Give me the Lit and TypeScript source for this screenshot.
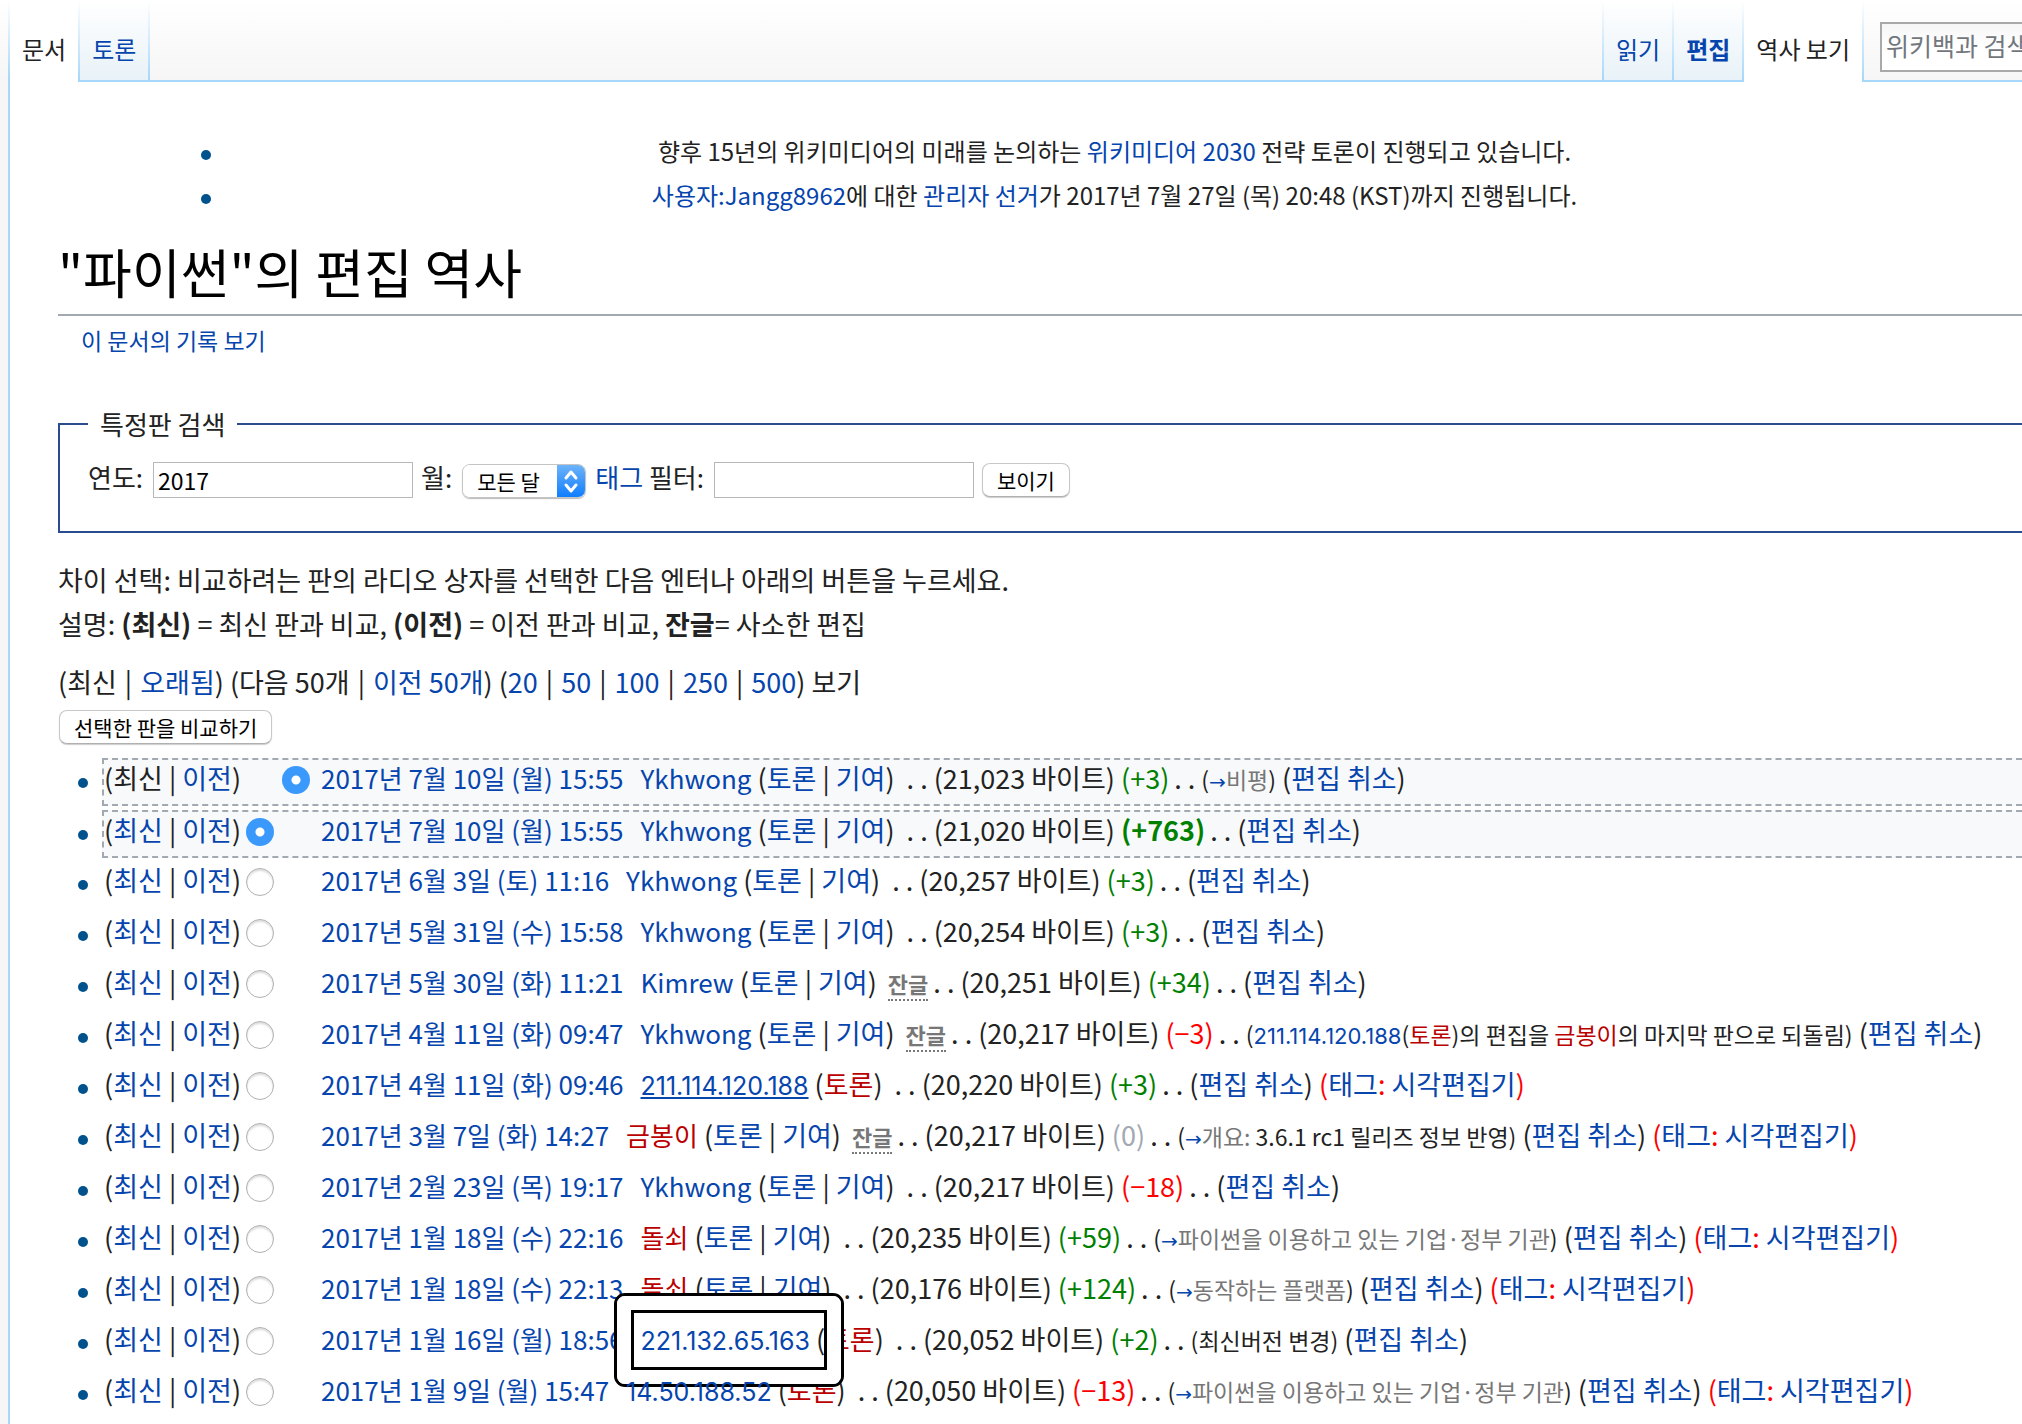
import { LitElement, html, css, nothing } from "lit";
import { customElement, property } from "lit/decorators.js";
import { classMap } from "lit/directives/class-map.js";

type Part = { text: string; kind?: "link" | "new"; ip?: boolean };

interface Revision {
  date: string;
  user: string;
  ip?: boolean;
  missing?: boolean;
  hovered?: boolean;
  marked?: boolean;
  minor?: boolean;
  bytes: string;
  diff: number;
  section?: string;
  comment?: Part[];
  tagged?: boolean;
}

const REVISIONS: Revision[] = [
  { date: "2017년 7월 10일 (월) 15:55", user: "Ykhwong", bytes: "21,023", diff: 3, section: "비평" },
  { date: "2017년 7월 10일 (월) 15:55", user: "Ykhwong", bytes: "21,020", diff: 763 },
  { date: "2017년 6월 3일 (토) 11:16", user: "Ykhwong", bytes: "20,257", diff: 3 },
  { date: "2017년 5월 31일 (수) 15:58", user: "Ykhwong", bytes: "20,254", diff: 3 },
  { date: "2017년 5월 30일 (화) 11:21", user: "Kimrew", minor: true, bytes: "20,251", diff: 34 },
  {
    date: "2017년 4월 11일 (화) 09:47", user: "Ykhwong", minor: true, bytes: "20,217", diff: -3,
    comment: [
      { text: "211.114.120.188", kind: "link", ip: true },
      { text: "(" },
      { text: "토론", kind: "new" },
      { text: ")의 편집을 " },
      { text: "금봉이", kind: "new" },
      { text: "의 마지막 판으로 되돌림" },
    ],
  },
  { date: "2017년 4월 11일 (화) 09:46", user: "211.114.120.188", ip: true, hovered: true, bytes: "20,220", diff: 3, tagged: true },
  {
    date: "2017년 3월 7일 (화) 14:27", user: "금봉이", missing: true, minor: true, bytes: "20,217", diff: 0,
    section: "개요:", comment: [{ text: " 3.6.1 rc1 릴리즈 정보 반영" }], tagged: true,
  },
  { date: "2017년 2월 23일 (목) 19:17", user: "Ykhwong", bytes: "20,217", diff: -18 },
  { date: "2017년 1월 18일 (수) 22:16", user: "돌쇠", missing: true, bytes: "20,235", diff: 59, section: "파이썬을 이용하고 있는 기업·정부 기관", tagged: true },
  { date: "2017년 1월 18일 (수) 22:13", user: "돌쇠", missing: true, bytes: "20,176", diff: 124, section: "동작하는 플랫폼", tagged: true },
  { date: "2017년 1월 16일 (월) 18:56", user: "221.132.65.163", ip: true, marked: true, bytes: "20,052", diff: 2, comment: [{ text: "최신버전 변경" }] },
  { date: "2017년 1월 9일 (월) 15:47", user: "14.50.188.52", ip: true, bytes: "20,050", diff: -13, section: "파이썬을 이용하고 있는 기업·정부 기관", tagged: true },
];

// Size changes beyond this many bytes are shown in bold.
const LARGE_CHANGE = 500;

const links = css`
  a {
    color: #0645ad;
    text-decoration: none;
  }
  a:hover {
    text-decoration: underline;
  }
  a.new {
    color: #ba0000;
  }
`;

@customElement("history-row")
class HistoryRow extends LitElement {
  @property({ attribute: false }) rev!: Revision;
  @property({ type: Number }) index = 0;

  static styles = [
    links,
    css`
      :host {
        display: flex;
        align-items: flex-start;
        white-space: pre;
        font-size: 27px;
      }
      .bullet {
        flex: none;
        width: 10px;
        height: 10px;
        margin: 18px 14px 0 0;
        border-radius: 50%;
        background: #00528c;
      }
      .box {
        flex: 1;
        display: grid;
        grid-template-columns: 142px 36px 39px 1fr;
        height: 47px;
        box-sizing: border-box;
        border-left: 2px solid transparent;
        line-height: 36px;
      }
      .box.selected {
        height: 48px;
        border: 2px dashed #a2a9b1;
        border-right: none;
        background: #f8f9fa;
      }
      .bullet.selected {
        margin-top: 20px;
      }
      .radio {
        appearance: none;
        box-sizing: border-box;
        display: block;
        width: 28px;
        height: 28px;
        margin: 6px 0 0;
        border: 1px solid #b0b0b0;
        border-radius: 50%;
        background: #fff;
        box-shadow: inset 0 2px 2px #ddd;
      }
      .radio:checked {
        border: none;
        background: radial-gradient(circle, #fff 0 4px, #3b99fc 5px);
        box-shadow: none;
      }
      .date,
      .user {
        font-size: 26px;
      }
      .user {
        margin-left: 17px;
        position: relative;
      }
      .ip {
        font-family: Inter, sans-serif;
        font-size: 25px;
      }
      .small .ip {
        font-size: 22px;
      }
      .hovered {
        text-decoration: underline;
      }
      .dots {
        margin: 0 6px 0 5px;
      }
      .dots.first {
        margin-left: 12px;
      }
      .minor + .dots.first {
        margin-left: 5px;
      }
      .minor {
        margin-left: 11px;
        border-bottom: 2px dotted #777;
        color: #777;
        font-size: 22px;
        font-weight: bold;
        text-decoration: none;
      }
      .plus {
        color: #008000;
      }
      .minus {
        color: #f00;
      }
      .zero {
        color: #a2a9b1;
      }
      .big {
        font-weight: bold;
      }
      .small {
        font-size: 23px;
      }
      .arrow {
        font-family: "DejaVu Sans", sans-serif;
        font-size: 20px;
      }
      .section {
        color: #777;
      }
      .tags {
        color: #f00;
      }
      .mark {
        position: absolute;
        left: -27px;
        top: calc(50% - 46px);
        width: 230px;
        height: 94px;
        box-sizing: border-box;
        border: 3px solid #000;
        border-radius: 11px;
        pointer-events: none;
      }
      .band {
        display: block;
        height: 100%;
        box-sizing: border-box;
        border: 14px solid #fff;
        border-radius: 8px;
      }
      .frame {
        display: block;
        height: 100%;
        box-sizing: border-box;
        border: 3px solid #000;
      }
    `,
  ];

  private part(p: Part) {
    return p.kind
      ? html`<a href="#" class=${classMap({ new: p.kind === "new", ip: !!p.ip })}>${p.text}</a>`
      : p.text;
  }

  private user(r: Revision) {
    const mark = html`<span class="mark"><span class="band"><span class="frame"></span></span></span>`;
    return html`<span class="user"><a href="#" class=${classMap({ new: !!r.missing, ip: !!r.ip, hovered: !!r.hovered })}>${r.user}</a>${r.marked ? mark : nothing}</span>`;
  }

  private talk(r: Revision) {
    return r.ip
      ? html`(<a href="#" class="new">토론</a>)`
      : html`(<a href="#">토론</a> | <a href="#">기여</a>)`;
  }

  private size(n: number) {
    const sign = n > 0 ? "+" : n < 0 ? "−" : "";
    const classes = { plus: n > 0, minus: n < 0, zero: n === 0, big: Math.abs(n) > LARGE_CHANGE };
    return html`<span class=${classMap(classes)}>(${sign}${Math.abs(n)})</span>`;
  }

  private comment(r: Revision) {
    if (!r.section && !r.comment) return nothing;
    const section = html`<a href="#" class="arrow">→</a><span class="section">${r.section}</span>`;
    return html`<span class="small">(${r.section ? section : nothing}${r.comment?.map((p) => this.part(p))})</span> `;
  }

  private tags(r: Revision) {
    return r.tagged
      ? html` <span class="tags">(<a href="#">태그</a>: <a href="#">시각편집기</a>)</span>`
      : nothing;
  }

  private radio(name: string, label: string, checked: boolean) {
    return html`<input class="radio" type="radio" name=${name} aria-label=${label} .checked=${checked} />`;
  }

  // White space is preserved inside a row, so the template stays on unbroken lines.
  render() {
    const r = this.rev;
    const first = this.index === 0;
    const selected = this.index < 2;
    const current = first ? "최신" : html`<a href="#">최신</a>`;
    const older = first ? nothing : this.radio("oldid", `${r.date} 이전 판`, selected);
    const newer = first ? this.radio("diff", `${r.date} 새 판`, true) : nothing;
    const minor = r.minor ? html`<abbr class="minor">잔글</abbr>` : nothing;
    const entry = html`<span><a href="#" class="date">${r.date}</a>${this.user(r)} ${this.talk(r)}${minor}<span class="dots first">. .</span>(${r.bytes} 바이트) ${this.size(r.diff)}<span class="dots">. .</span>${this.comment(r)}(<a href="#">편집 취소</a>)${this.tags(r)}</span>`;
    return html`<span class=${classMap({ bullet: true, selected })}></span><div class=${classMap({ box: true, selected })}><span>(${current} | <a href="#">이전</a>)</span><span>${older}</span><span>${newer}</span>${entry}</div>`;
  }
}

@customElement("app-root")
class AppRoot extends LitElement {
  static styles = [
    links,
    css`
      :host {
        display: flex;
        flex-direction: column;
        min-height: 100vh;
        overflow: hidden;
        background: #fff;
        color: #222;
        font-family: "Noto Sans CJK KR", sans-serif;
        font-size: 26px;
      }
      ul {
        list-style: none;
        margin: 0;
        padding: 0;
      }
      .head {
        display: flex;
        height: 82px;
        background: linear-gradient(#fff, #f6f6f6 80px);
        font-size: 24px;
        line-height: 34px;
      }
      .gutter {
        flex: none;
        width: 8px;
      }
      .edge {
        flex: none;
        width: 2px;
        background: linear-gradient(#fff, #a7d7f9 80px);
      }
      .tab {
        flex: none;
        box-sizing: border-box;
        padding: 32px 12px 0;
        border-bottom: 2px solid #a7d7f9;
        background: linear-gradient(#fff, #e8f2f8);
      }
      .tab.current {
        border: none;
        background: #fff;
      }
      .tab.current a {
        color: #222;
      }
      .tab.strong {
        font-weight: bold;
      }
      .rest {
        flex: 1;
        border-bottom: 2px solid #a7d7f9;
      }
      .search {
        flex: none;
        box-sizing: border-box;
        width: 158px;
        padding: 22px 0 0 16px;
        border-bottom: 2px solid #a7d7f9;
        overflow: hidden;
      }
      .search input {
        box-sizing: border-box;
        width: 400px;
        height: 50px;
        padding: 0 4px 4px;
        border: 2px solid #a9a9a9;
        border-radius: 0;
        background: linear-gradient(#f6f6f6, #fff 50%);
        font: 25px "Noto Sans CJK KR", sans-serif;
      }
      .search input::placeholder {
        color: #72777d;
      }
      .body {
        flex: 1;
        display: flex;
      }
      .body > .gutter {
        background: #f6f6f6;
      }
      .body > .edge {
        background: #a7d7f9;
      }
      main {
        flex: 1;
        min-width: 0;
        padding: 47px 0 0 48px;
      }
      .notices {
        margin-left: 143px;
        font-size: 24px;
        line-height: 44px;
      }
      .notices li {
        display: flex;
        align-items: center;
        padding-right: 4px;
      }
      .notices li::before {
        content: "";
        width: 10px;
        height: 10px;
        margin-top: 8px;
        border-radius: 50%;
        background: #00528c;
      }
      .notices p {
        flex: 1;
        margin: 0;
        text-align: center;
      }
      h1 {
        margin: 17px 0 0;
        padding-bottom: 6px;
        border-bottom: 2px solid #a2a9b1;
        color: #000;
        font-size: 53px;
        font-weight: normal;
        line-height: 74px;
      }
      .sub {
        padding-left: 23px;
        font-size: 23px;
        line-height: 48px;
      }
      fieldset {
        margin: 41px -2px 0 0;
        padding: 19px 28px 33px;
        border: 2px solid #2a4b8d;
      }
      legend {
        padding: 0 12px;
        line-height: 38px;
      }
      .filters {
        display: flex;
        height: 36px;
        line-height: 30px;
      }
      .filters input {
        box-sizing: border-box;
        width: 260px;
        height: 36px;
        margin: 0 8px 0 10px;
        padding: 0 4px;
        border: 1px solid #b8b8b8;
        color: #000;
        font: 23px "Noto Sans CJK KR", sans-serif;
      }
      .picker {
        display: flex;
        height: 34px;
        margin: 2px 9px 0 10px;
        box-sizing: border-box;
        border: 1px solid #c4c4c4;
        border-radius: 8px;
        overflow: hidden;
        box-shadow: 0 1px 1px #bbb;
      }
      .picker select {
        appearance: none;
        width: 94px;
        padding: 0 0 0 14px;
        border: none;
        background: #fff;
        color: #000;
        font: 21px/32px "Noto Sans CJK KR", sans-serif;
      }
      .picker svg {
        display: block;
        width: 28px;
        height: 34px;
        background: linear-gradient(#6cb3fa, #0a7aff);
      }
      button {
        height: 34px;
        margin: 1px 0 0;
        padding: 0 14px;
        border: 1px solid #c8c8c8;
        border-bottom-color: #b0b0b0;
        border-radius: 8px;
        background: #fff;
        box-shadow: 0 1px 1px #ccc;
        color: #000;
        font: 21px/30px "Noto Sans CJK KR", sans-serif;
      }
      .text {
        margin: 25px 0 14px;
        font-size: 27px;
        line-height: 44px;
      }
      .text p {
        margin: 0;
      }
      .pager {
        margin-bottom: 6px;
        font-size: 27px;
        line-height: 44px;
      }
      .bar {
        padding: 0 2px;
      }
      .compare {
        display: block;
        margin-left: 1px;
      }
      .history {
        display: flex;
        flex-direction: column;
        gap: 4px;
        margin: 14px 0 0 20px;
      }
    `,
  ];

  render() {
    const bar = html`<span class="bar"> | </span>`;
    const limits = [20, 50, 100, 250, 500].map(
      (n, i) => html`${i ? bar : nothing}<a href="#">${n}</a>`,
    );
    return html`
      <nav class="head">
        <div class="gutter"></div>
        <div class="edge"></div>
        <div class="tab current"><a href="#">문서</a></div>
        <div class="edge"></div>
        <div class="tab"><a href="#">토론</a></div>
        <div class="edge"></div>
        <div class="rest"></div>
        <div class="edge"></div>
        <div class="tab"><a href="#">읽기</a></div>
        <div class="edge"></div>
        <div class="tab strong"><a href="#">편집</a></div>
        <div class="edge"></div>
        <div class="tab current"><a href="#">역사 보기</a></div>
        <div class="edge"></div>
        <div class="search"><input type="search" aria-label="위키백과 검색" placeholder="위키백과 검색" /></div>
      </nav>
      <div class="body">
        <div class="gutter"></div>
        <div class="edge"></div>
        <main>
          <ul class="notices">
            <li><p>향후 15년의 위키미디어의 미래를 논의하는 <a href="#">위키미디어 2030</a> 전략 토론이 진행되고 있습니다.</p></li>
            <li><p><a href="#">사용자:Jangg8962</a>에 대한 <a href="#">관리자 선거</a>가 2017년 7월 27일 (목) 20:48 (KST)까지 진행됩니다.</p></li>
          </ul>
          <h1>"파이썬"의 편집 역사</h1>
          <div class="sub"><a href="#">이 문서의 기록 보기</a></div>
          <fieldset>
            <legend>특정판 검색</legend>
            <div class="filters">
              <label for="year">연도:</label>
              <input id="year" type="text" value="2017" />
              <label for="month">월:</label>
              <div class="picker">
                <select id="month"><option>모든 달</option></select>
                <svg viewBox="0 0 28 34" fill="none" stroke="#fff" stroke-width="3" stroke-linecap="round" stroke-linejoin="round" aria-hidden="true">
                  <path d="M9 13l5-6 5 6M9 20l5 6 5-6" />
                </svg>
              </div>
              <label for="tagfilter"><a href="#">태그</a> 필터:</label>
              <input id="tagfilter" type="text" />
              <button type="button">보이기</button>
            </div>
          </fieldset>
          <div class="text">
            <p>차이 선택: 비교하려는 판의 라디오 상자를 선택한 다음 엔터나 아래의 버튼을 누르세요.</p>
            <p>설명: <b>(최신)</b> = 최신 판과 비교, <b>(이전)</b> = 이전 판과 비교, <b>잔글</b>= 사소한 편집</p>
          </div>
          <div class="pager">(최신${bar}<a href="#">오래됨</a>) (다음 50개${bar}<a href="#">이전 50개</a>) (${limits}) 보기</div>
          <button class="compare" type="button">선택한 판을 비교하기</button>
          <ul class="history">
            ${REVISIONS.map((rev, i) => html`<li><history-row .rev=${rev} .index=${i}></history-row></li>`)}
          </ul>
        </main>
      </div>
    `;
  }
}
